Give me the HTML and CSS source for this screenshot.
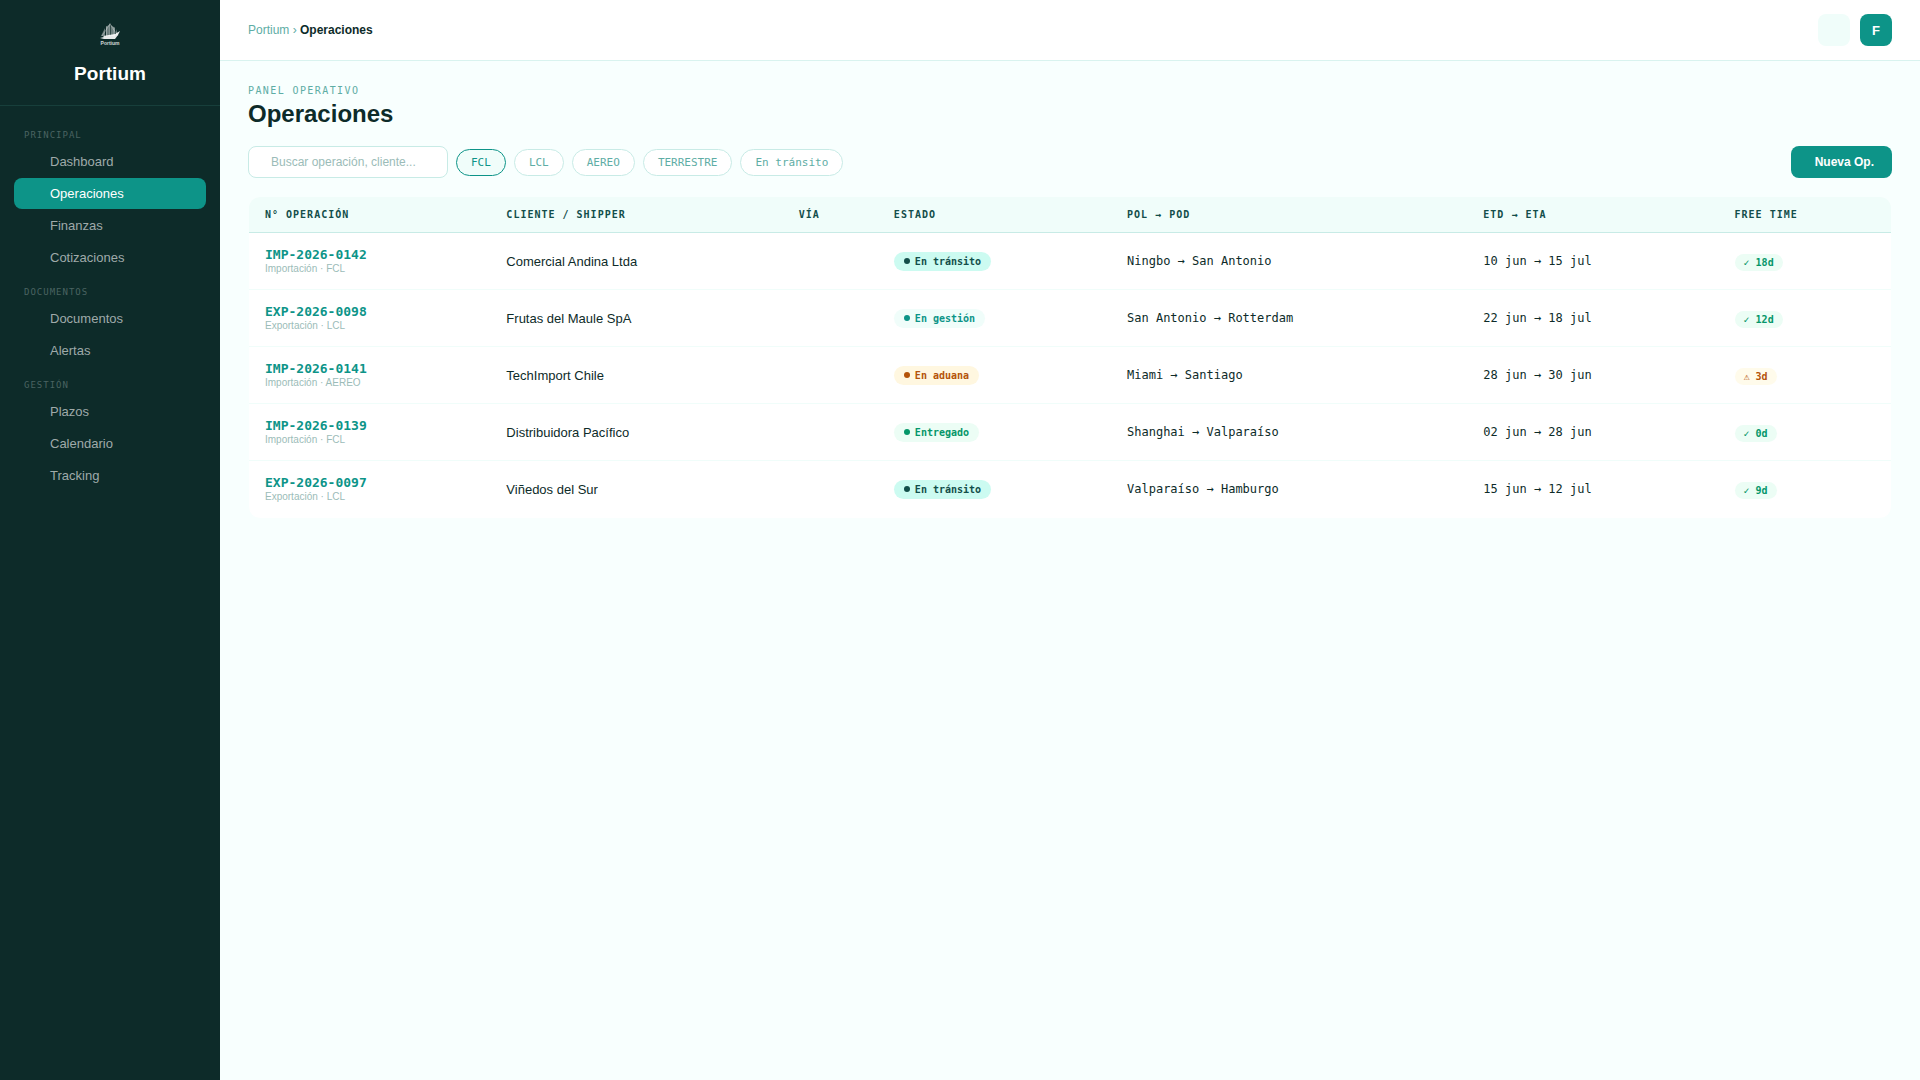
FILE: index.html
```html
<!DOCTYPE html>
<html lang="es">
<head>
<meta charset="utf-8">
<meta name="viewport" content="width=device-width, initial-scale=1">
<title>Portium · Operaciones</title>
<link rel="stylesheet" href="styles.css">
</head>
<body>
<div class="app">
  <aside class="sidebar">
    <div class="brand">
      <svg class="brand-logo" viewBox="0 0 40 32" aria-hidden="true">
        <path class="sail" d="M20 6v12h-4V9zM15 10v8h-4zM21 7l4 3v8h-4zM26 11l2 6h-2z"/>
        <path class="mast" d="M20 5v14M16.500 8v11M24 9v10M12 18l8-12 8 12"/>
        <path class="hull" d="M13 18l12-2 5-3-2 4-3 4H14l-4-1 4-1z"/>
        <text class="logo-text" x="20" y="27" text-anchor="middle">Portium</text>
      </svg>
      <span class="brand-name">Portium</span>
    </div>
    <nav class="nav" aria-label="Principal">
      <h2 class="nav-label">PRINCIPAL</h2>
      <a class="nav-item" href="#">Dashboard</a>
      <a class="nav-item active" href="#" aria-current="page">Operaciones</a>
      <a class="nav-item" href="#">Finanzas</a>
      <a class="nav-item" href="#">Cotizaciones</a>
      <h2 class="nav-label">DOCUMENTOS</h2>
      <a class="nav-item" href="#">Documentos</a>
      <a class="nav-item" href="#">Alertas</a>
      <h2 class="nav-label">GESTIÓN</h2>
      <a class="nav-item" href="#">Plazos</a>
      <a class="nav-item" href="#">Calendario</a>
      <a class="nav-item" href="#">Tracking</a>
    </nav>
  </aside>
  <div class="main">
    <header class="topbar">
      <div class="crumbs"><a href="#">Portium</a> › <strong>Operaciones</strong></div>
      <div class="top-actions">
        <button class="icon-btn" type="button" aria-label="Notificaciones"></button>
        <button class="avatar" type="button">F</button>
      </div>
    </header>
    <main class="content">
      <p class="eyebrow">PANEL OPERATIVO</p>
      <h1 class="title">Operaciones</h1>
      <div class="toolbar">
        <input class="search" type="search" placeholder="Buscar operación, cliente..." aria-label="Buscar operación">
        <button class="chip on" type="button">FCL</button>
        <button class="chip" type="button">LCL</button>
        <button class="chip" type="button">AEREO</button>
        <button class="chip" type="button">TERRESTRE</button>
        <button class="chip" type="button">En tránsito</button>
        <button class="primary" type="button">Nueva Op.</button>
      </div>
      <div class="card">
        <table class="ops">
          <colgroup>
            <col class="c-id"><col class="c-client"><col class="c-via"><col class="c-state"><col class="c-route"><col class="c-dates"><col class="c-free">
          </colgroup>
          <thead>
            <tr><th>N° OPERACIÓN</th><th>CLIENTE / SHIPPER</th><th>VÍA</th><th>ESTADO</th><th>POL → POD</th><th>ETD → ETA</th><th>FREE TIME</th></tr>
          </thead>
          <tbody>
            <tr>
              <td><div class="op-id">IMP-2026-0142</div><div class="op-sub">Importación · FCL</div></td>
              <td>Comercial Andina Ltda</td><td></td>
              <td><span class="badge transit">En tránsito</span></td>
              <td class="mono">Ningbo → San Antonio</td><td class="mono">10 jun → 15 jul</td>
              <td><span class="free ok">✓ 18d</span></td>
            </tr>
            <tr>
              <td><div class="op-id">EXP-2026-0098</div><div class="op-sub">Exportación · LCL</div></td>
              <td>Frutas del Maule SpA</td><td></td>
              <td><span class="badge managing">En gestión</span></td>
              <td class="mono">San Antonio → Rotterdam</td><td class="mono">22 jun → 18 jul</td>
              <td><span class="free ok">✓ 12d</span></td>
            </tr>
            <tr>
              <td><div class="op-id">IMP-2026-0141</div><div class="op-sub">Importación · AEREO</div></td>
              <td>TechImport Chile</td><td></td>
              <td><span class="badge customs">En aduana</span></td>
              <td class="mono">Miami → Santiago</td><td class="mono">28 jun → 30 jun</td>
              <td><span class="free warn">⚠ 3d</span></td>
            </tr>
            <tr>
              <td><div class="op-id">IMP-2026-0139</div><div class="op-sub">Importación · FCL</div></td>
              <td>Distribuidora Pacífico</td><td></td>
              <td><span class="badge delivered">Entregado</span></td>
              <td class="mono">Shanghai → Valparaíso</td><td class="mono">02 jun → 28 jun</td>
              <td><span class="free ok">✓ 0d</span></td>
            </tr>
            <tr>
              <td><div class="op-id">EXP-2026-0097</div><div class="op-sub">Exportación · LCL</div></td>
              <td>Viñedos del Sur</td><td></td>
              <td><span class="badge transit">En tránsito</span></td>
              <td class="mono">Valparaíso → Hamburgo</td><td class="mono">15 jun → 12 jul</td>
              <td><span class="free ok">✓ 9d</span></td>
            </tr>
          </tbody>
        </table>
      </div>
    </main>
  </div>
</div>
</body>
</html>
```
FILE: styles.css
```css
:root {
  --teal: #0d9488;
  --deep: #134e4a;
  --ink: #0d2b29;
  --muted: #5eada5;
  --faint: #9bbcb8;
  --line: #c8ebe6;
  --mint: #f0fdfa;
  --page: #f8fffe;
  --sans: "Liberation Sans", Arial, sans-serif;
  --mono: "DejaVu Sans Mono", monospace;
}

* { box-sizing: border-box; }

body {
  margin: 0;
  background: var(--page);
  color: var(--ink);
  font-family: var(--sans);
  font-size: 13px;
}

button, input { font-family: inherit; }

.app { display: flex; min-height: 100vh; }

/* Sidebar */
.sidebar { flex: 0 0 220px; background: var(--ink); }

.brand {
  display: flex;
  flex-direction: column;
  align-items: center;
  gap: 12px;
  padding: 18px 20px 20px;
  border-bottom: 1px solid #173f3b;
}
.brand-logo { width: 40px; height: 32px; }
.sail { fill: #fff; opacity: 0.4; }
.mast { fill: none; stroke: #fff; stroke-width: 0.5; opacity: 0.6; }
.hull { fill: #fff; opacity: 0.9; }
.logo-text { fill: #fff; font: bold 5px var(--sans); opacity: 0.8; }
.brand-name { color: #fff; font-size: 19px; font-weight: 700; line-height: 23px; }

.nav { display: flex; flex-direction: column; gap: 1px; padding: 11px 14px; }
.nav-label {
  margin: 0;
  padding: 13px 10px 4px;
  color: #4a6361;
  font: 9px/11px var(--mono);
  letter-spacing: 1px;
}
.nav-item {
  padding: 8px 10px 8px 36px;
  border-radius: 8px;
  color: #9faaa9;
  line-height: 15px;
  text-decoration: none;
}
.nav-item.active { background: var(--teal); color: #fff; }

/* Top bar */
.main { flex: 1; min-width: 0; }
.topbar {
  display: flex;
  align-items: center;
  justify-content: space-between;
  padding: 14px 28px;
  background: #fff;
  border-bottom: 1px solid #d9f3ef;
}
.crumbs { color: var(--muted); font-size: 12px; }
.crumbs a { color: inherit; text-decoration: none; }
.crumbs strong { color: var(--ink); }
.top-actions { display: flex; gap: 10px; }
.icon-btn, .avatar {
  width: 32px;
  height: 32px;
  padding: 0;
  border: 0;
  border-radius: 8px;
  background: var(--mint);
}
.avatar { background: var(--teal); color: #fff; font-size: 13px; font-weight: 700; }

/* Page */
.content { padding: 24px 28px; }
.eyebrow {
  margin: 0;
  color: var(--muted);
  font: 10px/12px var(--mono);
  letter-spacing: 0.14em;
}
.title { margin: 3px 0 18px; font-size: 24px; line-height: 28px; }

.toolbar { display: flex; align-items: center; gap: 8px; margin-bottom: 18px; }
.search {
  width: 200px;
  height: 32px;
  padding: 0 12px 0 22px;
  border: 1px solid var(--line);
  border-radius: 8px;
  background: #fff;
  color: var(--ink);
  font-size: 12px;
  appearance: none;
}
.search::placeholder { color: var(--faint); }
.chip {
  padding: 6px 14px;
  border: 1px solid var(--line);
  border-radius: 20px;
  background: #fff;
  color: var(--muted);
  font: 11px/13px var(--mono);
}
.chip.on { border-color: var(--teal); background: var(--mint); color: var(--teal); }
.primary {
  height: 32px;
  margin-left: auto;
  padding: 0 18px 0 24px;
  border: 0;
  border-radius: 8px;
  background: var(--teal);
  color: #fff;
  font-size: 12px;
  font-weight: 700;
}

/* Operations table */
.card {
  overflow: hidden;
  border: 1px solid #f8fffe;
  border-radius: 12px;
  background: #fff;
}
.ops { width: 100%; border-collapse: separate; border-spacing: 0; table-layout: fixed; }
.c-id { width: 14.7%; }
.c-client { width: 17.8%; }
.c-via { width: 5.8%; }
.c-state { width: 14.2%; }
.c-route { width: 21.7%; }
.c-dates { width: 15.3%; }
.c-free { width: 10.5%; }
.ops th {
  padding: 12px 16px 11px;
  border-bottom: 1px solid var(--line);
  background: var(--mint);
  color: var(--deep);
  font: bold 10px/12px var(--mono);
  letter-spacing: 1px;
  text-align: left;
}
.ops td {
  height: 57px;
  padding: 0 16px;
  border-bottom: 1px solid var(--mint);
  vertical-align: middle;
}
.ops tbody tr:last-child td { border-bottom-color: transparent; }
.op-id { color: var(--teal); font: bold 13px/15px var(--mono); }
.op-sub { color: var(--faint); font-size: 10px; line-height: 14px; }
.ops .mono { font: 12px/14px var(--mono); }

.badge {
  display: inline-flex;
  align-items: center;
  gap: 5px;
  padding: 3px 10px;
  border-radius: 20px;
  font: bold 10px/13px var(--mono);
}
.badge::before { content: ""; width: 6px; height: 6px; border-radius: 50%; background: currentColor; }
.transit { background: #ccfbf1; color: var(--deep); }
.managing { background: var(--mint); color: var(--teal); }
.customs { background: #fff7e0; color: #b45309; }
.delivered { background: #ecfdf5; color: #059669; }

.free {
  display: inline-block;
  margin-top: 2px;
  padding: 3px 9px 2px;
  border-radius: 20px;
  font: bold 10px/12px var(--mono);
}
.ok { background: #ecfdf5; color: #059669; }
.warn { background: #fffbeb; color: #b45309; }
```
